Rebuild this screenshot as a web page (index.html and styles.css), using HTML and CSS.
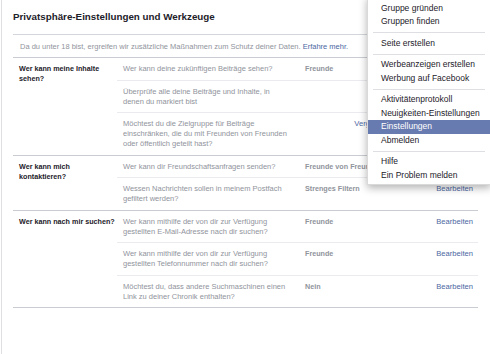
FILE: index.html
```html
<!DOCTYPE html>
<html lang="de">

<head>
    <meta charset="UTF-8">
    <meta name="viewport" content="width=device-width, initial-scale=1.0">
    <title>Privatsphäre-Einstellungen</title>
    <link rel="stylesheet" href="styles.css">
</head>

<body>
    <div class="page">
        <h1 class="page-title">Privatsphäre-Einstellungen und Werkzeuge</h1>

        <div class="notice">
            Da du unter 18 bist, ergreifen wir zusätzliche Maßnahmen zum Schutz deiner Daten. <a href="#">Erfahre mehr.</a>
        </div>

        <!-- Section: Inhalte -->
        <div class="section">
            <div class="section-label">Wer kann meine Inhalte sehen?</div>
            <div class="rows">
                <div class="row">
                    <div class="question">Wer kann deine zukünftigen Beiträge sehen?</div>
                    <div class="value">Freunde</div>
                    <a class="edit" href="#">Bearbeiten</a>
                </div>
                <div class="row">
                    <div class="question">Überprüfe alle deine Beiträge und Inhalte, in denen du markiert bist</div>
                    <div class="value"></div>
                </div>
                <div class="row">
                    <div class="question">Möchtest du die Zielgruppe für Beiträge einschränken, die du mit Freunden von Freunden oder öffentlich geteilt hast?</div>
                    <div class="value"></div>
                    <a class="edit" href="#">Vergangene Beiträge einschränken</a>
                </div>
            </div>
        </div>

        <!-- Section: Kontakt -->
        <div class="section">
            <div class="section-label">Wer kann mich kontaktieren?</div>
            <div class="rows">
                <div class="row">
                    <div class="question">Wer kann dir Freundschaftsanfragen senden?</div>
                    <div class="value">Freunde von Freunden</div>
                    <a class="edit" href="#">Bearbeiten</a>
                </div>
                <div class="row">
                    <div class="question">Wessen Nachrichten sollen in meinem Postfach gefiltert werden?</div>
                    <div class="value">Strenges Filtern</div>
                    <a class="edit" href="#">Bearbeiten</a>
                </div>
            </div>
        </div>

        <!-- Section: Suche -->
        <div class="section">
            <div class="section-label">Wer kann nach mir suchen?</div>
            <div class="rows">
                <div class="row">
                    <div class="question">Wer kann mithilfe der von dir zur Verfügung gestellten E-Mail-Adresse nach dir suchen?</div>
                    <div class="value">Freunde</div>
                    <a class="edit" href="#">Bearbeiten</a>
                </div>
                <div class="row">
                    <div class="question">Wer kann mithilfe der von dir zur Verfügung gestellten Telefonnummer nach dir suchen?</div>
                    <div class="value">Freunde</div>
                    <a class="edit" href="#">Bearbeiten</a>
                </div>
                <div class="row">
                    <div class="question">Möchtest du, dass andere Suchmaschinen einen Link zu deiner Chronik enthalten?</div>
                    <div class="value">Nein</div>
                    <a class="edit" href="#">Bearbeiten</a>
                </div>
            </div>
        </div>
    </div>

    <!-- Account menu -->
    <ul class="menu">
        <li>Gruppe gründen</li>
        <li>Gruppen finden</li>
        <li class="sep"></li>
        <li>Seite erstellen</li>
        <li class="sep"></li>
        <li>Werbeanzeigen erstellen</li>
        <li>Werbung auf Facebook</li>
        <li class="sep"></li>
        <li>Aktivitätenprotokoll</li>
        <li>Neuigkeiten-Einstellungen</li>
        <li class="active">Einstellungen</li>
        <li>Abmelden</li>
        <li class="sep"></li>
        <li>Hilfe</li>
        <li>Ein Problem melden</li>
    </ul>
</body>

</html>
```

FILE: styles.css
```css
body {
    font-family: "Liberation Sans", Arial, sans-serif;
    font-size: 7.5px;
    line-height: 10px;
    margin: 0;
    padding: 0;
    background-color: #fff;
    color: #1d2129;
}

a {
    color: #4b67a1;
    text-decoration: none;
}

.page {
    margin-left: 1px;
    border-left: 1px solid #dddfe2;
    padding: 0 12px 0 11px;
    min-height: 354px;
    box-sizing: border-box;
}

.page-title {
    margin: 0;
    padding: 9.5px 0 10px;
    font-size: 9.8px;
    line-height: 14px;
    font-weight: bold;
    color: #1d2129;
    border-bottom: 1px solid #d3d6db;
}

.notice {
    padding: 7px 7px 5.5px;
    color: #90949c;
    border-bottom: 1px solid #c9ccd1;
}

.section {
    display: flex;
    border-bottom: 1px solid #c9ccd1;
}

.section-label {
    width: 104px;
    flex-shrink: 0;
    box-sizing: border-box;
    padding: 6px 0 0 6px;
    font-size: 7.2px;
    font-weight: bold;
}

.rows {
    flex: 1;
}

.row {
    display: flex;
    padding: 6px 5px 5.5px 6px;
    border-bottom: 1px solid #e9ebee;
}

.row:last-child {
    border-bottom: none;
}

.question {
    width: 168px;
    flex-shrink: 0;
    margin-right: 14px;
    color: #90949c;
}

.value {
    flex: 1;
    font-size: 7.2px;
    font-weight: bold;
    color: #90949c;
    white-space: nowrap;
}

.edit {
    font-size: 7.6px;
    text-align: right;
    white-space: nowrap;
}

.menu {
    position: absolute;
    top: -4px;
    left: 367px;
    width: 124px;
    margin: 0;
    padding: 4.5px 0 2px;
    list-style: none;
    background-color: #fff;
    border: 1px solid rgba(0, 0, 0, 0.15);
    box-shadow: 0 3px 8px rgba(0, 0, 0, 0.3);
    box-sizing: border-box;
    font-size: 8.5px;
}

.menu li {
    height: 13.5px;
    line-height: 13.5px;
    padding-left: 13px;
    white-space: nowrap;
}

.menu li.active {
    background-color: #687bb0;
    color: #fff;
}

.menu li.sep {
    height: 1px;
    margin: 3.5px 5px;
    padding: 0;
    background-color: #dddfe2;
}
```
